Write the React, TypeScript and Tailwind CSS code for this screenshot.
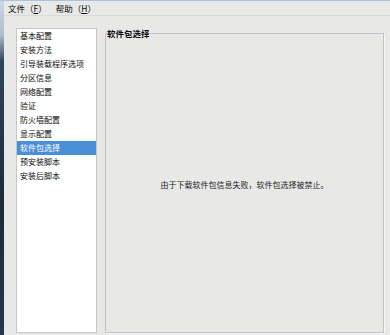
import React from "react";

const sections = [
  "基本配置",
  "安装方法",
  "引导装载程序选项",
  "分区信息",
  "网络配置",
  "验证",
  "防火墙配置",
  "显示配置",
  "软件包选择",
  "预安装脚本",
  "安装后脚本",
];

const App = () => {
  const selected = "软件包选择";
  return (
    <div className="flex h-[335px] w-[390px] flex-col overflow-hidden bg-[#e8e8e7] font-['Noto_Sans_CJK_SC',sans-serif] text-[8px] text-[#0a0a0a]">
      <div className="h-px bg-[#a9c4e2]" />
      <div className="flex flex-1">
        <div className="w-[4px] bg-[linear-gradient(to_bottom,#c9d5e2_0%,#aebfd0_10%,#2d4660_18%,#1a2b3d_60%,#22384f_100%)]" />
        <div className="flex flex-1 flex-col">
          <div className="flex h-[15px] items-center gap-[9px] border-b border-[#dadad8] pl-[4px] text-[8.5px]">
            <span>
              文件（<span className="underline">F</span>）
            </span>
            <span>
              帮助（<span className="underline">H</span>）
            </span>
          </div>
          <div className="flex flex-1 gap-[8px] pb-[2px] pl-[12px] pr-[6px] pt-[12px]">
            <ul className="w-[81px] border border-[#c6c6c6] bg-white">
              {sections.map((s) => (
                <li
                  key={s}
                  className={
                    s === selected
                      ? "bg-[#4a8ed8] pl-[3px] leading-[14px] text-white"
                      : "pl-[3px] leading-[14px]"
                  }
                >
                  {s}
                </li>
              ))}
            </ul>
            <fieldset className="flex flex-1 items-center justify-center border border-[#c2c2c2] shadow-[1px_1px_0_#f7f7f7]">
              <legend className="ml-[1px] text-[8.5px] font-bold leading-[10px]">软件包选择</legend>
              <p className="text-[#1e1e1e]">由于下载软件包信息失败，软件包选择被禁止。</p>
            </fieldset>
          </div>
        </div>
      </div>
    </div>
  );
};

export default App;
